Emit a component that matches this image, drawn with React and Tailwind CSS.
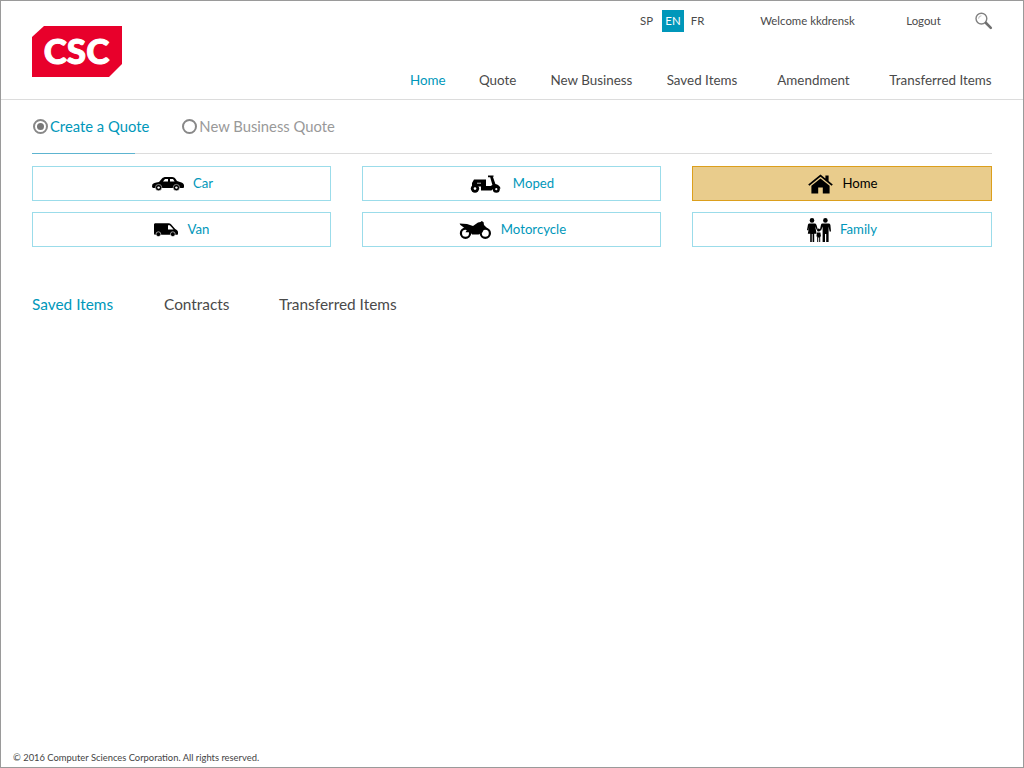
import { useState } from "react";

const font = "font-['Lato','Noto_Sans',sans-serif]";

function CarIcon() {
  return (
    <svg width="32" height="14" viewBox="0 0 32 14" fill="#000">
      <path d="M0.3 7.6C1 6.1 3 5.5 7 5L10 1.5C11 0.5 12 0 14 0H20C22 0 23 0.8 25 4L29.5 5.4C31 5.9 32 7 32 8.5V10.4L31 11H1L0 10Z" />
      <path d="M11 4.6L13 2H16V4.6ZM18 2H21L22.6 4.6H18Z" fill="#fff" />
      <circle cx="6.6" cy="10.6" r="3.2" stroke="#fff" strokeWidth="0.5" />
      <circle cx="24.4" cy="10.6" r="3.2" stroke="#fff" strokeWidth="0.5" />
      <circle cx="6.6" cy="10.6" r="1.2" fill="#fff" />
      <circle cx="24.4" cy="10.6" r="1.2" fill="#fff" />
    </svg>
  );
}

function VanIcon() {
  return (
    <svg width="24" height="14" viewBox="0 0 24 14" fill="#000">
      <path d="M1.4 0.2H14.6C15.6 0.2 16.4 0.6 17 1.2L21.2 6L22.8 7C23.6 7.5 24 8.2 24 9V10.8C24 11.4 23.6 11.8 23 11.8H1.4C0.6 11.8 0 11.2 0 10.4V1.6C0 0.8 0.6 0.2 1.4 0.2Z" />
      <path d="M14 2.2H15.8L19.6 6.6H14Z" fill="#fff" />
      <circle cx="4.4" cy="11.2" r="2.4" stroke="#fff" strokeWidth="0.6" />
      <circle cx="18.8" cy="11.2" r="2.4" stroke="#fff" strokeWidth="0.6" />
    </svg>
  );
}

function MopedIcon() {
  return (
    <svg width="32" height="18" viewBox="0 0 32 18" fill="#000">
      <path d="M19 0.4H24.4L25 1.6H23.8L26.4 9C28.8 9.6 31 11 31.6 13.6H24.6L22.4 15.4H12V11.4H3V8L5 4.4H17V11H21.6L23.4 10L21.2 2.2H19Z" />
      <circle cx="6" cy="13.6" r="4.2" />
      <circle cx="6" cy="13.6" r="1.3" fill="#fff" />
      <circle cx="27.3" cy="14.2" r="3.5" />
      <circle cx="27.3" cy="14.2" r="1.1" fill="#fff" />
      <rect x="8" y="7.6" width="4" height="1.4" fill="#888" />
    </svg>
  );
}

function MotorcycleIcon() {
  return (
    <svg width="33" height="18" viewBox="0 0 33 18" fill="#000">
      <circle cx="6.5" cy="12.2" r="4.6" fill="none" stroke="#000" strokeWidth="2.2" />
      <circle cx="26.3" cy="12.2" r="4.6" fill="none" stroke="#000" strokeWidth="2.2" />
      <path d="M0.6 2.4L8 3L14 5L19 1.6L21.5 1L22.8 0L24.6 1.2L25 4L28 7L27.2 8.6L25.2 7.4L23.4 11.4L19.6 13.4H13L11.4 11.2H6.5L7.8 9L3.5 5.6L1.4 4Z" />
    </svg>
  );
}

function HomeIcon() {
  return (
    <svg width="25" height="20" viewBox="0 0 25 20" fill="#000">
      <path d="M12.5 0.4L17.4 4.4V1.4H20.6V7L24.8 10.4L23.6 11.8L12.5 2.8L1.4 11.8L0.2 10.4Z" />
      <path d="M12.5 4.4L21.6 11.8V19.6H14.8V13.6H10.2V19.6H3.4V11.8Z" />
    </svg>
  );
}

function FamilyIcon() {
  return (
    <svg width="24" height="24" viewBox="0 0 24 24" fill="#000">
      <circle cx="5" cy="2.4" r="2.3" />
      <circle cx="18.4" cy="2.4" r="2.3" />
      <circle cx="11.6" cy="12" r="1.6" />
      <path d="M2.6 5.4H7.6C8.6 5.4 9.2 6 9.5 7L10.8 11.4L9.8 12L8.2 8.2L9.6 15.8H7.2V24H5.6V16H4.8V24H3.2V15.8H0.8L2.4 8L1.2 12.4L0 12L1 6.6C1.2 5.8 1.8 5.4 2.6 5.4Z" />
      <path d="M15.6 5.4H21.6C22.6 5.4 23.2 6 23.4 7L24 13.6H22.6L21.6 8.4V24H19.2V16H18V24H15.6V8.4L14 12.8L12.8 12.2L14 6.8C14.2 5.9 14.8 5.4 15.6 5.4Z" />
      <path d="M10 14.4H13.4L14 18.6H13.2V24H12.2V19.6H11.2V24H10.2V18.6H9.4Z" />
    </svg>
  );
}

function SearchIcon() {
  return (
    <svg width="18" height="18" viewBox="0 0 18 18" fill="none">
      <circle cx="6.4" cy="6.6" r="5.4" stroke="#808080" strokeWidth="1.4" />
      <path d="M3.6 6.6A2.8 2.8 0 0 1 6.4 3.8" stroke="#bbb" strokeWidth="1" />
      <path d="M11 11L15.8 15.8" stroke="#707070" strokeWidth="2.6" strokeLinecap="round" />
    </svg>
  );
}

const navItems = [
  { label: "Home", cls: "w-[35px] text-[#0097ba]" },
  { label: "Quote", cls: "ml-[34px] w-[37px]" },
  { label: "New Business", cls: "ml-[34px] w-[83px]" },
  { label: "Saved Items", cls: "ml-[33px] w-[72px]" },
  { label: "Amendment", cls: "ml-[39px] w-[73px]" },
  { label: "Transferred Items", cls: "ml-[39px] w-[103px]" },
];

const products = [
  { label: "Car", Icon: CarIcon, cls: "gap-[9px] pl-[2px]" },
  { label: "Moped", Icon: MopedIcon, cls: "gap-[12px]" },
  { label: "Home", Icon: HomeIcon, cls: "gap-[9px] pl-[2px]" },
  { label: "Van", Icon: VanIcon, cls: "gap-[10px]" },
  { label: "Motorcycle", Icon: MotorcycleIcon, cls: "gap-[9px] pl-[2px]" },
  { label: "Family", Icon: FamilyIcon, cls: "gap-[9px]" },
];

export default function App() {
  const [selected] = useState("Home");

  return (
    <div className={`${font} w-[1024px] h-[768px] border border-[#9a9a9a] bg-white flex flex-col text-[#4a4a4a] overflow-hidden`}>
      {/* Header */}
      <header className="h-[99px] shrink-0 border-b border-[#dcdcdc] pl-[31px] pr-[31px] flex justify-between">
        <svg width="90" height="51" viewBox="0 0 90 51" className="mt-[25px]">
          <path d="M12 0H90V38L77 51H0V11Z" fill="#e8002b" />
          <text x="44.5" y="38" textAnchor="middle" fill="#fff" fontFamily="Lato, sans-serif" fontWeight="900" fontSize="35" stroke="#fff" strokeWidth="1">CSC</text>
        </svg>

        <div className="flex flex-col items-end">
          <div className="flex items-center h-[22px] mt-[9px] text-[11.4px]">
            <span className="w-[22px] text-left">SP</span>
            <span className="w-[22px] h-[22px] flex items-center justify-center bg-[#0097ba] text-white">EN</span>
            <span className="w-[27px] text-center">FR</span>
            <span className="ml-[49px] w-[95px] text-center whitespace-nowrap">Welcome kkdrensk</span>
            <span className="ml-[51px] w-[35px] text-center">Logout</span>
            <span className="ml-[34px] w-[17px] mb-[1px]"><SearchIcon /></span>
          </div>
          <nav className="flex mt-[38px] text-[13.4px] leading-[20px]">
            {navItems.map((item) => (
              <a key={item.label} className={`${item.cls} text-center whitespace-nowrap`}>{item.label}</a>
            ))}
          </nav>
        </div>
      </header>

      <main className="flex-1 px-[31px] flex flex-col">
        {/* Quote type */}
        <div className="h-[54px] border-b border-[#dcdcdc] relative flex items-center gap-[33px] text-[14.8px] pb-[1px]">
          <label className="flex items-center gap-[2px] text-[#0097ba]">
            <span className="w-[15px] h-[15px] rounded-full border-2 border-[#888] flex items-center justify-center ml-[1px]">
              <span className="w-[7px] h-[7px] rounded-full bg-[#777]" />
            </span>
            Create a Quote
          </label>
          <label className="flex items-center gap-[2px] text-[#999]">
            <span className="w-[15px] h-[15px] rounded-full border-2 border-[#888]" />
            New Business Quote
          </label>
          <span className="absolute left-0 bottom-[-1px] w-[103px] h-[1px] bg-[#5db4d0]" />
        </div>

        {/* Products */}
        <div className="grid grid-cols-[299px_299px_300px] gap-x-[31px] gap-y-[11px] mt-[12px]">
          {products.map(({ label, Icon, cls }) => (
            <button
              key={label}
              className={`h-[35px] border flex items-center justify-center text-[13.2px] ${cls} ${
                selected === label
                  ? "bg-[#e9cc8c] border-[#dc9f1c] text-black"
                  : "bg-white border-[#9bdcea] text-[#0097ba]"
              }`}
            >
              <Icon />
              <span>{label}</span>
            </button>
          ))}
        </div>

        {/* Tabs */}
        <div className="flex mt-[46px] text-[15.4px] leading-[22px]">
          <a className="w-[82px] text-[#0097ba] whitespace-nowrap">Saved Items</a>
          <a className="ml-[50px] w-[65px] whitespace-nowrap">Contracts</a>
          <a className="ml-[50px] whitespace-nowrap">Transferred Items</a>
        </div>
      </main>

      <footer className="pl-[12px] h-[19px] text-[9.4px] leading-[19px] text-[#444]">
        © 2016 Computer Sciences Corporation. All rights reserved.
      </footer>
    </div>
  );
}
